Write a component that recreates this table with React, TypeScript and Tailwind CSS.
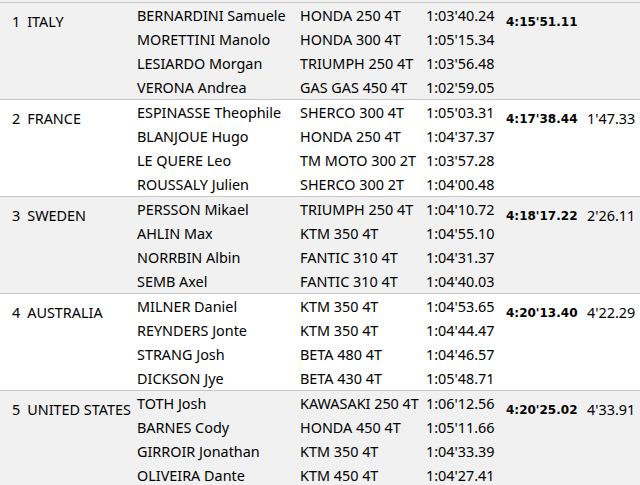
type Rider = { name: string; bike: string; time: string };
type Team = { pos: number; country: string; total: string; gap: string; riders: Rider[] };

const teams: Team[] = [
  {
    pos: 1,
    country: "ITALY",
    total: "4:15'51.11",
    gap: "",
    riders: [
      { name: "BERNARDINI Samuele", bike: "HONDA 250 4T", time: "1:03'40.24" },
      { name: "MORETTINI Manolo", bike: "HONDA 300 4T", time: "1:05'15.34" },
      { name: "LESIARDO Morgan", bike: "TRIUMPH 250 4T", time: "1:03'56.48" },
      { name: "VERONA Andrea", bike: "GAS GAS 450 4T", time: "1:02'59.05" },
    ],
  },
  {
    pos: 2,
    country: "FRANCE",
    total: "4:17'38.44",
    gap: "1'47.33",
    riders: [
      { name: "ESPINASSE Theophile", bike: "SHERCO 300 4T", time: "1:05'03.31" },
      { name: "BLANJOUE Hugo", bike: "HONDA 250 4T", time: "1:04'37.37" },
      { name: "LE QUERE Leo", bike: "TM MOTO 300 2T", time: "1:03'57.28" },
      { name: "ROUSSALY Julien", bike: "SHERCO 300 2T", time: "1:04'00.48" },
    ],
  },
  {
    pos: 3,
    country: "SWEDEN",
    total: "4:18'17.22",
    gap: "2'26.11",
    riders: [
      { name: "PERSSON Mikael", bike: "TRIUMPH 250 4T", time: "1:04'10.72" },
      { name: "AHLIN Max", bike: "KTM 350 4T", time: "1:04'55.10" },
      { name: "NORRBIN Albin", bike: "FANTIC 310 4T", time: "1:04'31.37" },
      { name: "SEMB Axel", bike: "FANTIC 310 4T", time: "1:04'40.03" },
    ],
  },
  {
    pos: 4,
    country: "AUSTRALIA",
    total: "4:20'13.40",
    gap: "4'22.29",
    riders: [
      { name: "MILNER Daniel", bike: "KTM 350 4T", time: "1:04'53.65" },
      { name: "REYNDERS Jonte", bike: "KTM 350 4T", time: "1:04'44.47" },
      { name: "STRANG Josh", bike: "BETA 480 4T", time: "1:04'46.57" },
      { name: "DICKSON Jye", bike: "BETA 430 4T", time: "1:05'48.71" },
    ],
  },
  {
    pos: 5,
    country: "UNITED STATES",
    total: "4:20'25.02",
    gap: "4'33.91",
    riders: [
      { name: "TOTH Josh", bike: "KAWASAKI 250 4T", time: "1:06'12.56" },
      { name: "BARNES Cody", bike: "HONDA 450 4T", time: "1:05'11.66" },
      { name: "GIRROIR Jonathan", bike: "KTM 350 4T", time: "1:04'33.39" },
      { name: "OLIVEIRA Dante", bike: "KTM 450 4T", time: "1:04'27.41" },
    ],
  },
];

export default function App() {
  return (
    <div
      className="w-[640px] h-[485px] overflow-hidden bg-[#f1f1f1] pt-[2px] text-[14.4px] text-black"
      style={{ fontFamily: '"Noto Sans", "Open Sans", sans-serif' }}
    >
      {teams.map((team) => (
        <div
          key={team.pos}
          className={`flex border-t border-[#c6c6c6] ${team.pos % 2 === 0 ? "bg-white" : "bg-[#f1f1f1]"}`}
        >
          {/* Country */}
          <div className="w-[137px] shrink-0 pl-[12px] pt-[7px] flex gap-[7px] leading-[24px] whitespace-nowrap">
            <span>{team.pos}</span>
            <span>{team.country}</span>
          </div>

          {/* Riders */}
          <div className="flex flex-col">
            {team.riders.map((r) => (
              <div key={r.name} className="flex h-[24px] pt-[2px] items-center whitespace-nowrap">
                <span className="w-[163px]">{r.name}</span>
                <span className="w-[126px]">{r.bike}</span>
                <span className="w-[80px]">{r.time}</span>
              </div>
            ))}
          </div>

          {/* Total + gap */}
          <div className="flex pt-[7px] leading-[24px] whitespace-nowrap">
            <span
              className="w-[81px] font-bold text-[12px]"
              style={{ fontFamily: '"DejaVu Sans", Verdana, sans-serif' }}
            >
              {team.total}
            </span>
            <span>{team.gap}</span>
          </div>
        </div>
      ))}
    </div>
  );
}
